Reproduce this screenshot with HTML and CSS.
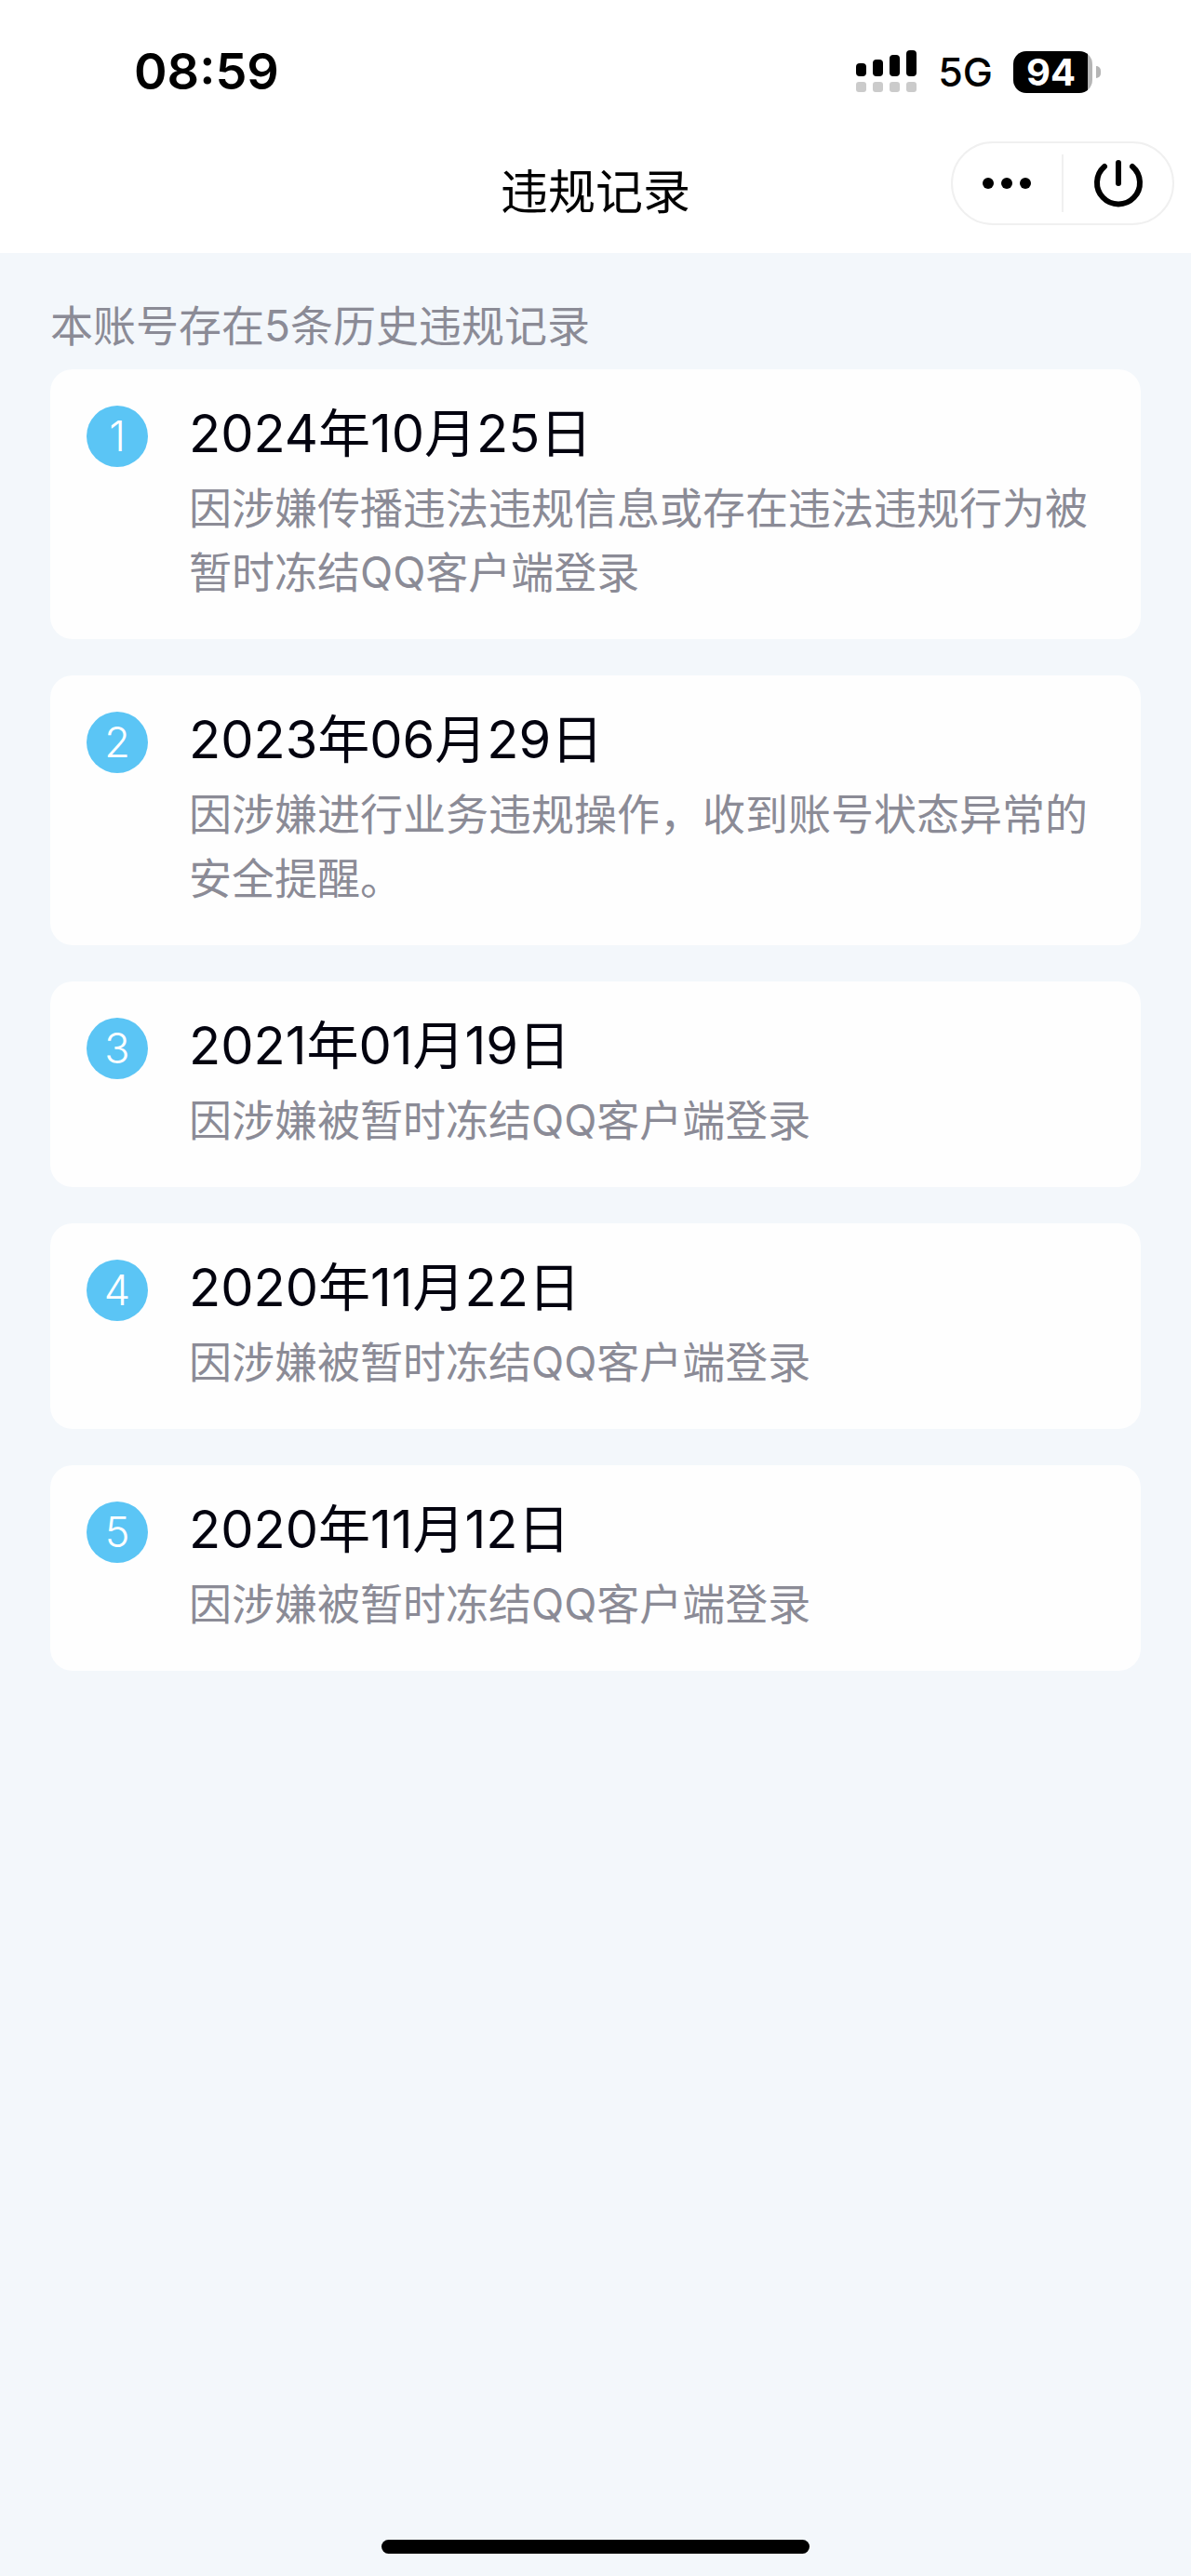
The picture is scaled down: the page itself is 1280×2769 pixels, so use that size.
FILE: index.html
```html
<!DOCTYPE html>
<html lang="zh-CN">
<head>
	<meta charset="utf-8">
	<meta name="viewport" content="width=device-width, initial-scale=1">
	<title>违规记录</title>
	<link rel="stylesheet" href="styles.css">
</head>
<body>

	<header>
		<div class="statusbar">
			<span class="time">08:59</span>
			<div class="status">
				<svg class="signal" width="66" height="46" viewBox="0 0 66 46">
					<rect x="0" y="14" width="11" height="14" rx="4"/>
					<rect x="18" y="10" width="11" height="18" rx="4"/>
					<rect x="36" y="5" width="11" height="23" rx="4"/>
					<rect x="54" y="0" width="11" height="28" rx="4"/>
					<g fill="#cbcbcb">
						<rect x="0" y="34" width="11" height="11" rx="3"/>
						<rect x="18" y="34" width="11" height="11" rx="3"/>
						<rect x="36" y="34" width="11" height="11" rx="3"/>
						<rect x="54" y="34" width="11" height="11" rx="3"/>
					</g>
				</svg>
				<span class="network">5G</span>
				<div class="battery"><span class="level">94</span></div>
			</div>
		</div>
		<div class="navbar">
			<h1>违规记录</h1>
			<div class="capsule">
				<button type="button" aria-label="更多">
					<svg width="56" height="56" viewBox="0 0 56 56">
						<circle cx="7" cy="28" r="6"/>
						<circle cx="27" cy="28" r="6"/>
						<circle cx="47" cy="28" r="6"/>
					</svg>
				</button>
				<span class="line"></span>
				<button type="button" aria-label="关闭">
					<svg width="56" height="56" viewBox="0 0 56 56" fill="none" stroke="#000" stroke-width="6" stroke-linecap="round">
						<path d="M28 6V28"/>
						<path d="M13 10A23 23 0 1 0 43 10"/>
					</svg>
				</button>
			</div>
		</div>
	</header>

	<main>
		<p class="tip">本账号存在5条历史违规记录</p>
		<ol class="records">
			<li>
				<span class="num">1</span>
				<div class="info">
					<h2>2024年10月25日</h2>
					<p>因涉嫌传播违法违规信息或存在违法违规行为被暂时冻结QQ客户端登录</p>
				</div>
			</li>
			<li>
				<span class="num">2</span>
				<div class="info">
					<h2>2023年06月29日</h2>
					<p>因涉嫌进行业务违规操作，收到账号状态异常的安全提醒。</p>
				</div>
			</li>
			<li>
				<span class="num">3</span>
				<div class="info">
					<h2>2021年01月19日</h2>
					<p>因涉嫌被暂时冻结QQ客户端登录</p>
				</div>
			</li>
			<li>
				<span class="num">4</span>
				<div class="info">
					<h2>2020年11月22日</h2>
					<p>因涉嫌被暂时冻结QQ客户端登录</p>
				</div>
			</li>
			<li>
				<span class="num">5</span>
				<div class="info">
					<h2>2020年11月12日</h2>
					<p>因涉嫌被暂时冻结QQ客户端登录</p>
				</div>
			</li>
		</ol>
	</main>

	<div class="home"></div>

</body>
</html>
```
FILE: styles.css
```css
* {
	box-sizing: border-box;
	margin: 0;
	padding: 0;
}
body {
	display: flex;
	flex-direction: column;
	min-height: 100vh;
	background-color: #f3f7fb;
	color: #000;
	font-family: Inter, "Noto Sans CJK SC", sans-serif;
}
svg {
	display: block;
}
header {
	background-color: #fff;
}

/* 状态栏 */
.statusbar {
	display: flex;
	align-items: center;
	justify-content: space-between;
	padding: 32px 106px 0 144px;
}
.time {
	font-size: 54px;
	font-weight: 600;
	line-height: 90px;
}
.status {
	display: flex;
	align-items: center;
}
.network {
	margin: 0 22px;
	font-size: 43px;
	font-weight: 500;
	line-height: 48px;
}
.battery {
	position: relative;
	width: 85px;
	height: 45px;
	border-radius: 14px;
	background: linear-gradient(to right, #000 80px, #b5b5b5 80px);
	color: #fff;
	text-align: center;
}
.battery::after {
	content: "";
	position: absolute;
	top: 16px;
	right: -9px;
	width: 5px;
	height: 13px;
	border-radius: 0 6px 6px 0;
	background-color: #b5b5b5;
}
.level {
	display: block;
	padding-right: 4px;
	font-size: 40px;
	font-weight: 700;
	line-height: 45px;
}

/* 导航栏 */
.navbar {
	display: grid;
	grid-template-columns: 1fr auto 1fr;
	align-items: center;
	height: 150px;
	padding: 0 18px;
}
.navbar h1 {
	grid-column: 2;
	padding-top: 20px;
	font-size: 51px;
	font-weight: 400;
	line-height: 60px;
}
.capsule {
	display: flex;
	align-items: center;
	justify-self: end;
	width: 240px;
	height: 90px;
	border: 2px solid #f0f0f0;
	border-radius: 45px;
}
.capsule button {
	display: flex;
	flex: 1;
	align-items: center;
	justify-content: center;
	height: 86px;
	border: none;
	background: none;
}
.capsule .line {
	width: 2px;
	height: 62px;
	background-color: #f0f0f0;
}

/* 违规列表 */
main {
	flex: 1;
	padding: 44px 54px;
}
.tip {
	padding-bottom: 12px;
	color: #8b8b96;
	font-size: 46px;
	line-height: 69px;
}
.records {
	display: flex;
	flex-direction: column;
	gap: 39px;
	list-style: none;
}
.records li {
	display: flex;
	gap: 44px;
	padding: 39px 39px 37px;
	border-radius: 24px;
	background-color: #fefefe;
}
.num {
	flex: none;
	width: 66px;
	height: 66px;
	border-radius: 50%;
	background-color: #5bc5f5;
	color: #fff;
	font-size: 45px;
	font-weight: 300;
	line-height: 66px;
	text-align: center;
}
.info h2 {
	padding-bottom: 16px;
	color: #03030f;
	font-size: 56px;
	font-weight: 400;
	line-height: 60px;
}
.info p {
	color: #8b8b96;
	font-size: 46px;
	line-height: 69px;
}

.home {
	width: 36%;
	height: 15px;
	margin: 0 auto 24px;
	border-radius: 8px;
	background-color: #000;
}
```
